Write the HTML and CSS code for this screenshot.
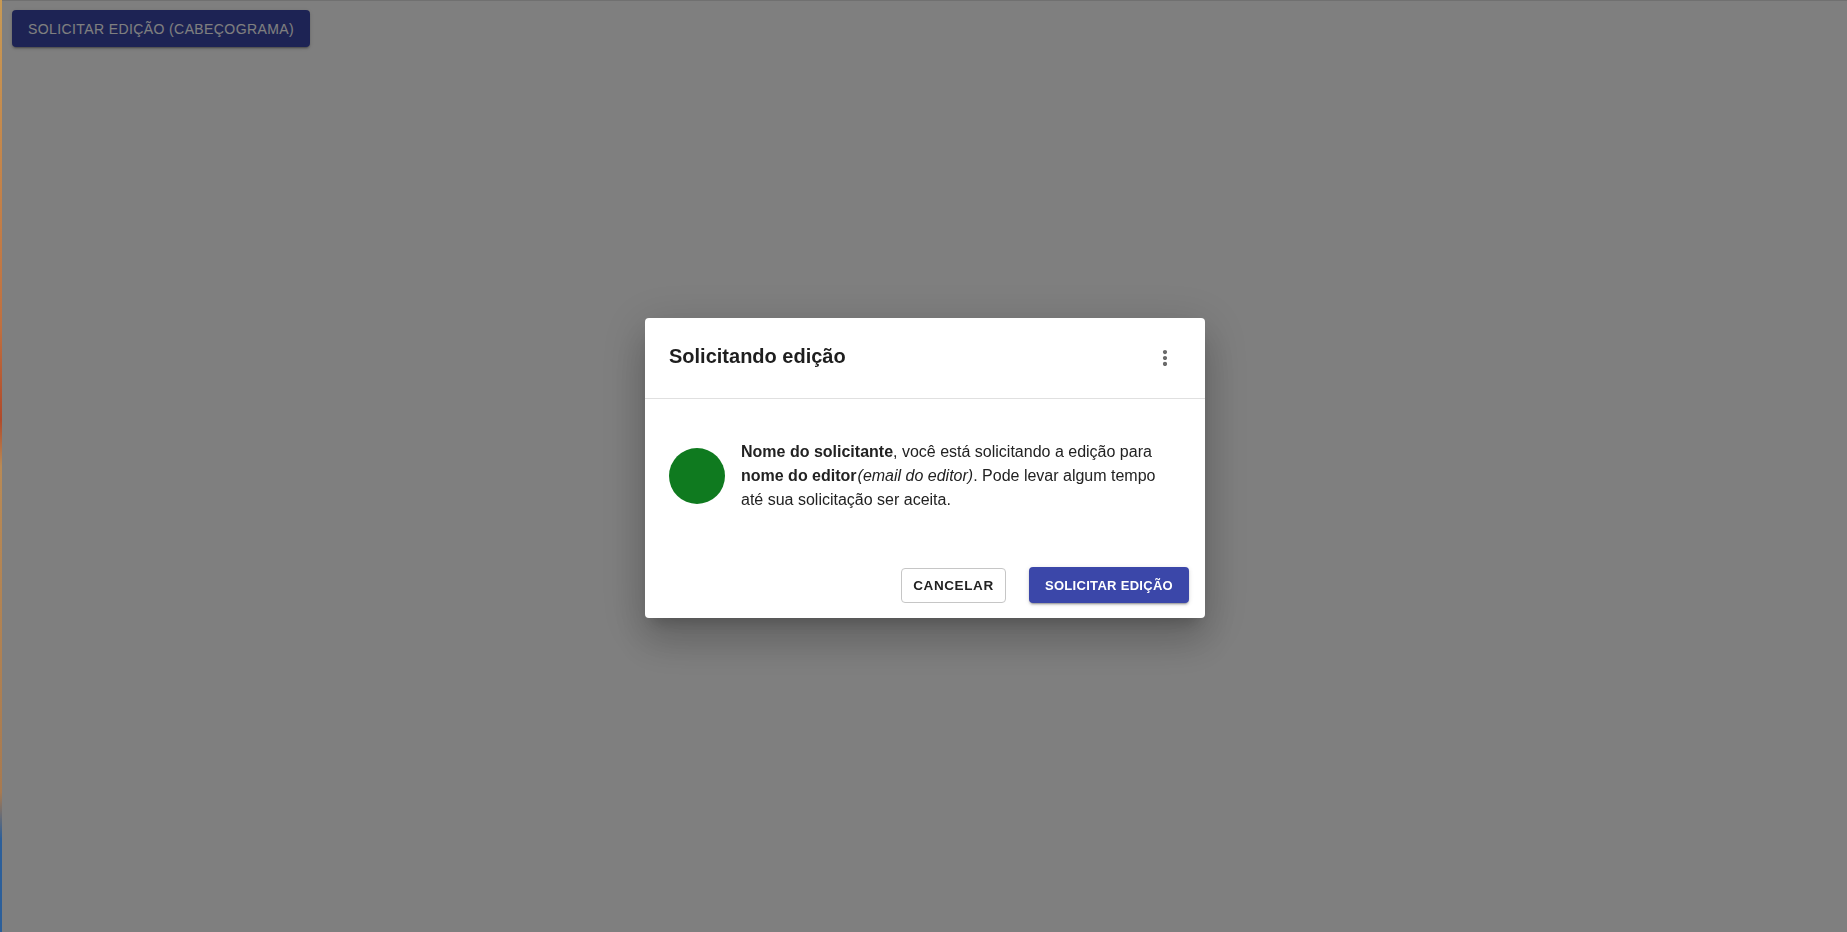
FILE: index.html
```html
<!DOCTYPE html>
<html lang="pt-BR">
<head>
<meta charset="utf-8">
<title>Solicitar edição</title>
<link rel="stylesheet" href="styles.css">
</head>
<body>
<div class="page">
  <button class="btn btn-contained page-btn">Solicitar edição (Cabeçograma)</button>
</div>
<div class="edge-left"></div>
<div class="backdrop">
  <div class="dialog" role="dialog">
    <div class="dialog-header">
      <h2 class="dialog-title">Solicitando edição</h2>
      <button class="icon-btn" aria-label="mais">
        <svg width="24" height="24" viewBox="0 0 24 24"><path fill="#6b6b6b" d="M12 8.2c1.2 0 2.1-.9 2.1-2.1S13.2 4 12 4s-2.1.9-2.1 2.1.9 2.1 2.1 2.1zm0 1.7c-1.2 0-2.1.9-2.1 2.1s.9 2.1 2.1 2.1 2.1-.9 2.1-2.1-.9-2.1-2.1-2.1zm0 5.9c-1.2 0-2.1.9-2.1 2.1S10.8 20 12 20s2.1-.9 2.1-2.1-.9-2.1-2.1-2.1z"/></svg>
      </button>
    </div>
    <div class="dialog-body">
      <div class="avatar"></div>
      <p class="message"><strong>Nome do solicitante</strong>, você está solicitando a edição para <strong>nome do editor</strong><em>(email do editor)</em>. Pode levar algum tempo até sua solicitação ser aceita.</p>
    </div>
    <div class="dialog-actions">
      <button class="btn btn-outlined">Cancelar</button>
      <button class="btn btn-contained btn-bold">Solicitar edição</button>
    </div>
  </div>
</div>
</body>
</html>
```

FILE: styles.css
```css
* { box-sizing: border-box; }

html, body {
  margin: 0;
  padding: 0;
  height: 100%;
  background: #ffffff;
  font-family: "Liberation Sans", Arial, Helvetica, sans-serif;
  color: #222222;
}

.page {
  padding: 10px 12px;
}

.btn {
  font-family: "Liberation Sans", Arial, Helvetica, sans-serif;
  font-size: 14px;
  text-transform: uppercase;
  letter-spacing: 0.4px;
  height: 36px;
  border-radius: 4px;
  cursor: pointer;
  display: inline-flex;
  align-items: center;
  justify-content: center;
  white-space: nowrap;
}

.btn-contained {
  background: #3b47a9;
  color: #ffffff;
  border: none;
  padding: 0 16px;
  box-shadow: 0 3px 1px -2px rgba(0,0,0,0.2), 0 2px 2px 0 rgba(0,0,0,0.14), 0 1px 5px 0 rgba(0,0,0,0.12);
}

.page-btn {
  width: 298px;
  height: 37px;
  padding: 0;
  font-weight: 400;
}

.btn-outlined {
  background: #ffffff;
  color: #222222;
  border: 1px solid #c6c6c6;
  padding: 0;
  font-weight: 700;
  font-size: 13.5px;
  letter-spacing: 0.6px;
  width: 105px;
  height: 35px;
}

.btn-bold {
  font-weight: 700;
  font-size: 13px;
  letter-spacing: 0.3px;
  width: 160px;
  padding: 0;
}

.edge-left {
  position: fixed;
  left: 0;
  top: 0;
  bottom: 0;
  width: 2px;
  background: linear-gradient(to bottom, #c89a55 0%, #c07040 35%, #b04a2a 45%, #b98a55 50%, #a87a50 85%, #2c5f9a 90%, #2c5f9a 100%);
  z-index: 2;
}

.backdrop {
  position: fixed;
  inset: 0;
  background: rgba(0, 0, 0, 0.5);
  border-top: 1px solid rgba(0,0,0,0.12);
  display: flex;
  align-items: center;
  justify-content: center;
  padding: 2px 0 0 3px;
  z-index: 1;
}

.dialog {
  width: 560px;
  height: 300px;
  background: #ffffff;
  border-radius: 4px;
  display: flex;
  flex-direction: column;
  box-shadow: 0 11px 15px -7px rgba(0,0,0,0.2), 0 24px 38px 3px rgba(0,0,0,0.14), 0 9px 46px 8px rgba(0,0,0,0.12);
}

.dialog-header {
  height: 81px;
  display: flex;
  align-items: center;
  justify-content: space-between;
  padding: 0 28px 0 24px;
  border-bottom: 1px solid #e0e0e0;
}

.dialog-title {
  margin: 0;
  font-size: 20px;
  font-weight: 700;
  color: #1e1e1e;
  line-height: 1.2;
  padding-bottom: 3px;
}

.icon-btn {
  width: 24px;
  height: 24px;
  padding: 0;
  border: none;
  background: transparent;
  display: flex;
  align-items: center;
  justify-content: center;
}

.dialog-body {
  display: flex;
  align-items: center;
  gap: 16px;
  padding: 41px 24px 41px 24px;
  height: 154px;
}

.avatar {
  width: 56px;
  height: 56px;
  border-radius: 50%;
  background: #0f7a1f;
  flex: none;
}

.message {
  margin: 0;
  font-size: 16px;
  line-height: 24px;
  color: #222222;
  max-width: 440px;
}

.message strong { font-weight: 700; }
.message em { font-style: italic; padding-left: 1px; }

.dialog-actions {
  display: flex;
  justify-content: flex-end;
  align-items: center;
  gap: 23px;
  padding: 0 16px 0 16px;
  flex: 1;
}
```
